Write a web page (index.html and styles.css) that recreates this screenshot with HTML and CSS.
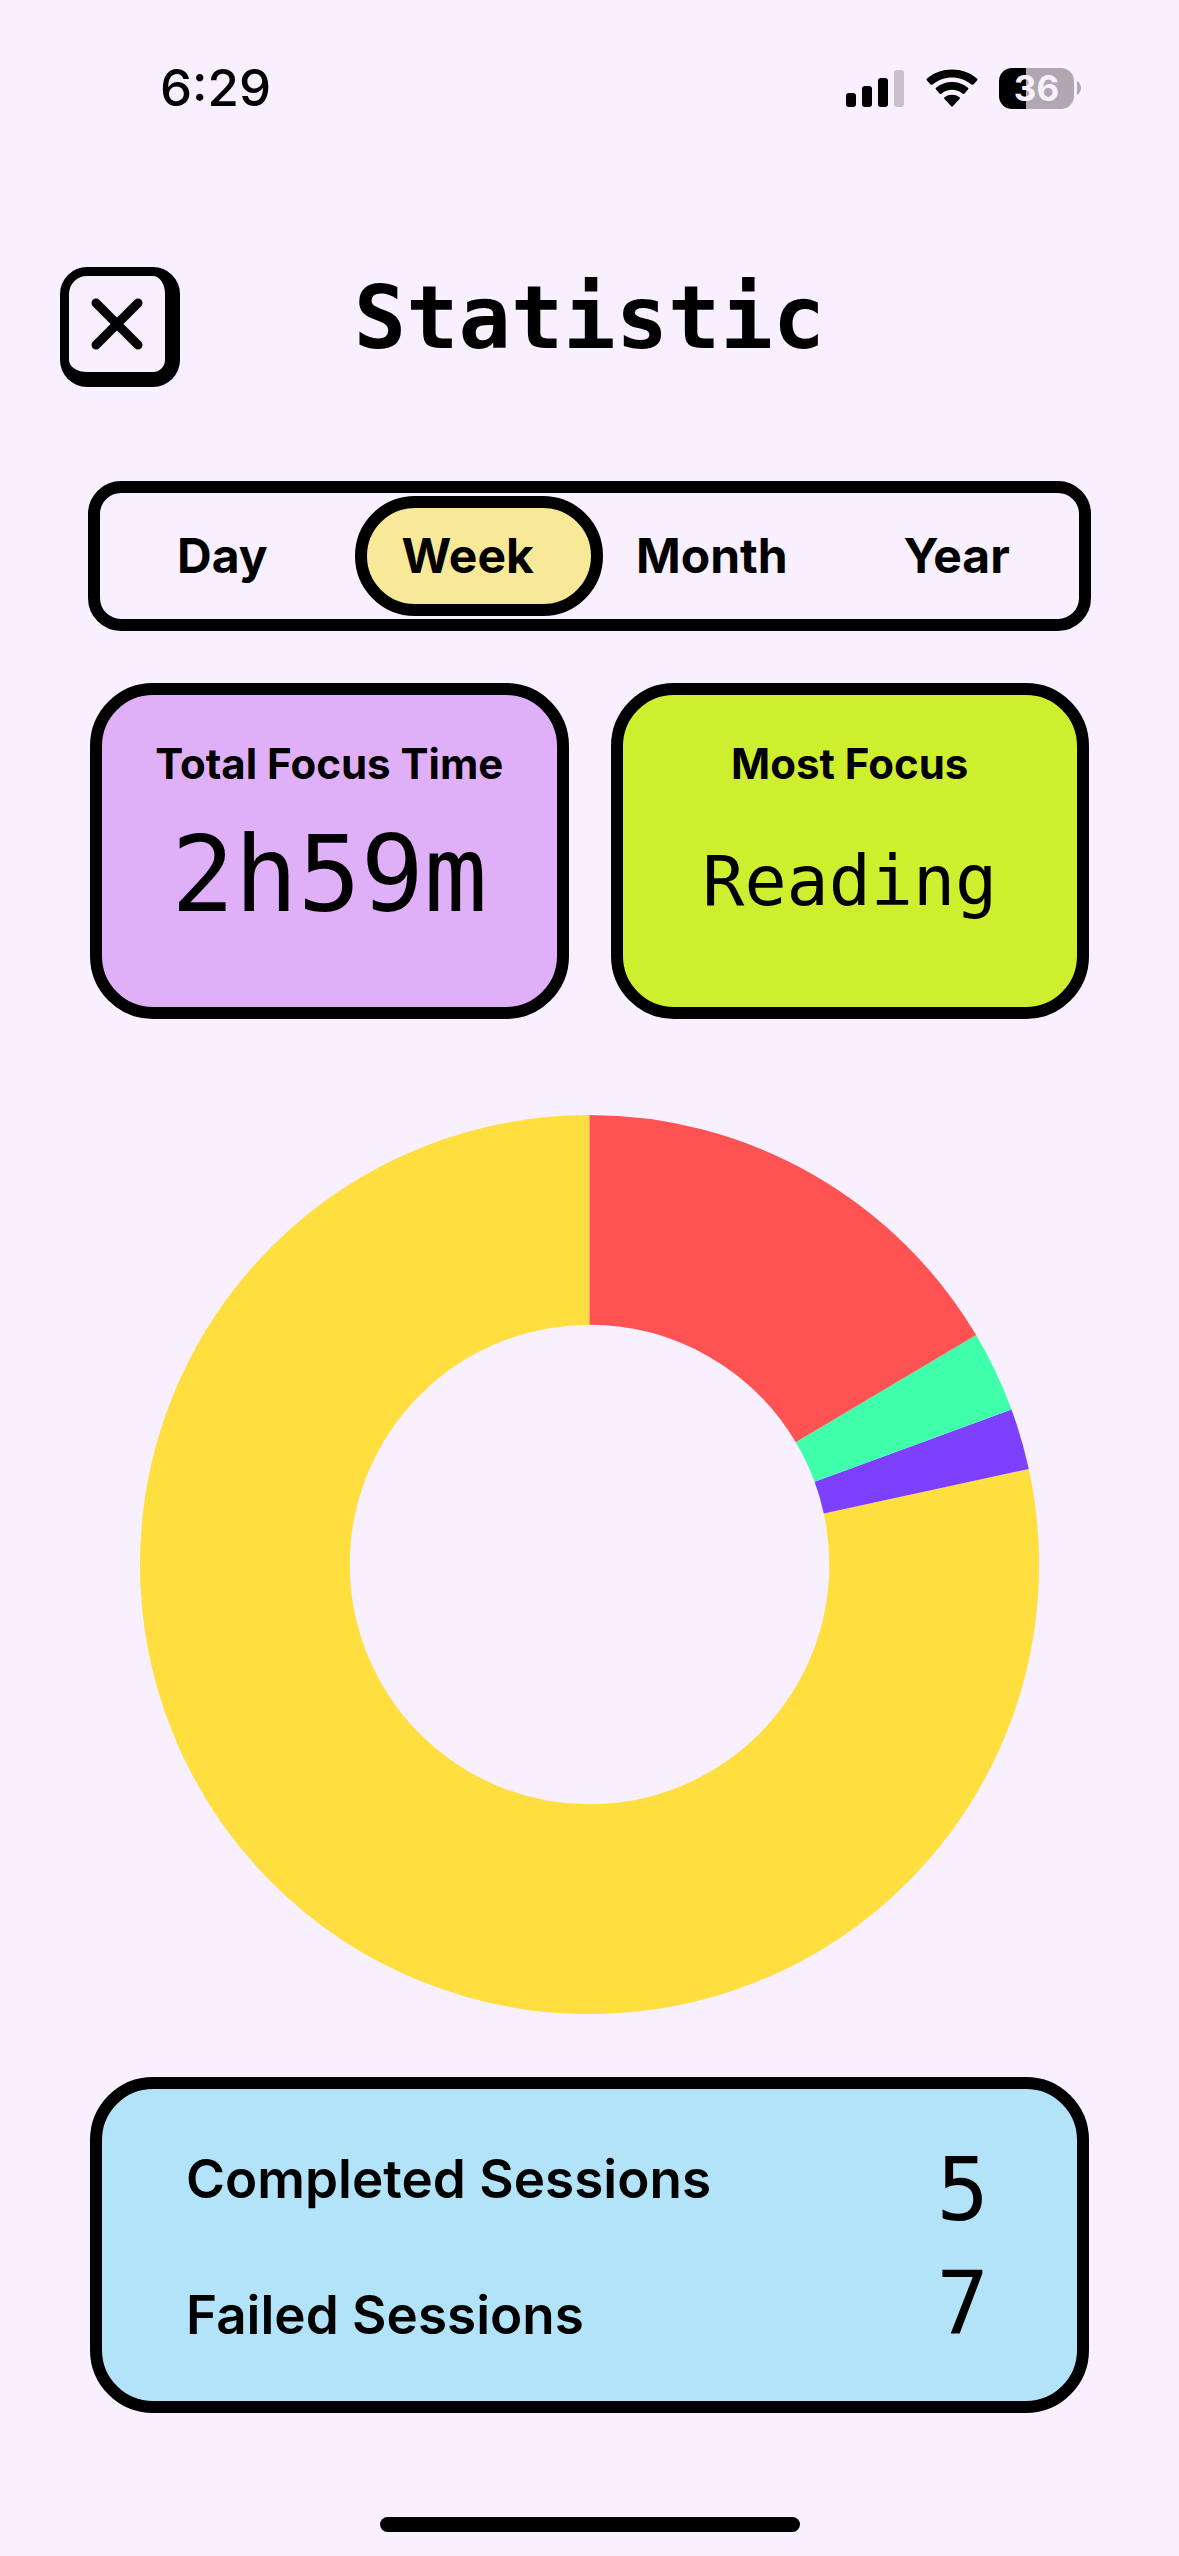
FILE: index.html
```html
<!DOCTYPE html>
<html lang="en">
<head>
<meta charset="utf-8">
<meta name="viewport" content="width=device-width, initial-scale=1">
<title>Statistic</title>
<link rel="stylesheet" href="styles.css">
</head>
<body>
<div class="screen">
  <div class="status">
    <time class="clock">6:29</time>
    <div class="indicators">
      <svg class="signal" viewBox="0 0 58 38" aria-hidden="true">
        <rect x="0" y="24" width="10" height="14" rx="3"/>
        <rect x="16" y="17" width="10" height="21" rx="3"/>
        <rect x="32" y="9" width="10" height="29" rx="3"/>
        <rect class="signal-off" x="48" y="1" width="10" height="37" rx="3"/>
      </svg>
      <svg class="wifi" viewBox="0 0 52 38" aria-hidden="true">
        <path d="M1 11.5Q0 10.500 1 9.500C15-2.500 37-2.500 51 9.500Q52 10.500 51 11.500L47.500 15.500Q46.500 16 45.500 15.500C34 6 18 6 6.500 15.500Q5.500 16 4.500 15.500Z"/>
        <path d="M10 20.500Q9 19.500 10 18.700C19 11 33 11 42 18.700Q43 19.500 42 20.500L38.500 24.500Q37.500 25.500 36.500 24.500C30 19.500 22 19.500 15.500 24.500Q14.500 25.500 13.500 24.500Z"/>
        <path d="M18.500 30Q17.500 29 18.500 28.300C23 25 29 25 33.500 28.300Q34.500 29 33.500 30L27 37Q26 38 25 37Z"/>
      </svg>
      <div class="battery">
        <span class="battery-level">36</span>
        <svg class="battery-tip" viewBox="0 0 4 14" aria-hidden="true"><path d="M0 0C2.500 1.500 4 4 4 7S2.500 12.500 0 14Z"/></svg>
      </div>
    </div>
  </div>

  <header class="header">
    <button class="close" type="button" aria-label="Close">
      <svg class="close-icon" viewBox="0 0 52 52" aria-hidden="true"><path d="M5 5L47 47M47 5L5 47"/></svg>
    </button>
    <h1 class="title">Statistic</h1>
  </header>

  <main class="content">
    <nav class="tabs" aria-label="Period">
      <button class="tab" type="button">Day</button>
      <button class="tab tab-active" type="button" aria-pressed="true">Week</button>
      <button class="tab" type="button">Month</button>
      <button class="tab" type="button">Year</button>
    </nav>

    <div class="cards">
      <section class="card card-time">
        <h2 class="card-label">Total Focus Time</h2>
        <p class="card-value">2h59m</p>
      </section>
      <section class="card card-most">
        <h2 class="card-label">Most Focus</h2>
        <p class="card-value card-value-small">Reading</p>
      </section>
    </div>

    <svg class="chart" viewBox="0 0 900 900" role="img" aria-label="Focus time by category">
      <g transform="rotate(-90 450 450)">
        <circle class="slice slice-yellow" cx="450" cy="450" r="345" pathLength="3600" stroke-dasharray="2823 3600" stroke-dashoffset="-777"/>
        <circle class="slice slice-violet" cx="450" cy="450" r="345" pathLength="3600" stroke-dasharray="79 3600" stroke-dashoffset="-698"/>
        <circle class="slice slice-green" cx="450" cy="450" r="345" pathLength="3600" stroke-dasharray="105 3600" stroke-dashoffset="-593"/>
        <circle class="slice slice-red" cx="450" cy="450" r="345" pathLength="3600" stroke-dasharray="593 3600"/>
      </g>
    </svg>

    <dl class="card sessions">
      <dt class="session-label">Completed Sessions</dt>
      <dd class="session-value">5</dd>
      <dt class="session-label session-label-last">Failed Sessions</dt>
      <dd class="session-value">7</dd>
    </dl>
  </main>

  <div class="home-bar"></div>
</div>
</body>
</html>
```
FILE: styles.css
```css
* {
  box-sizing: border-box;
  margin: 0;
  padding: 0;
}

body {
  background: #f8f0ff;
  color: #000;
  font-family: Inter, "Noto Sans", sans-serif;
}

button {
  border: 0;
  background: none;
  color: inherit;
  font: inherit;
  cursor: pointer;
}

.screen {
  display: flex;
  flex-direction: column;
  min-height: 100vh;
}

/* Status bar */
.status {
  display: flex;
  justify-content: space-between;
  align-items: center;
  height: 176px;
  padding: 0 98px 0 160px;
}

.clock {
  font-size: 51px;
  font-weight: 500;
  line-height: 60px;
}

.indicators {
  display: flex;
  align-items: center;
}

.signal {
  width: 58px;
  height: 38px;
  margin-right: 22px;
}

.signal-off {
  fill: #c9c0cf;
}

.wifi {
  width: 52px;
  height: 38px;
  margin-right: 21px;
}

.battery {
  display: flex;
  align-items: center;
  gap: 3px;
}

.battery-level {
  width: 75px;
  border-radius: 13px;
  background: linear-gradient(90deg, #000 36%, #aea8b1 36%);
  color: #f8f0ff;
  font-size: 35px;
  font-weight: 700;
  line-height: 41px;
  text-align: center;
}

.battery-tip {
  width: 4px;
  height: 14px;
  fill: #aea8b1;
}

/* Header */
.header {
  display: grid;
  grid-template-columns: 120px 1fr 120px;
  padding: 91px 60px 0;
}

.close {
  display: grid;
  place-items: center;
  height: 120px;
  border: 9px solid #000;
  border-right-width: 15px;
  border-bottom-width: 15px;
  border-radius: 27px;
}

.close-icon {
  width: 52px;
  height: 52px;
  stroke: #000;
  stroke-width: 9;
  stroke-linecap: round;
}

.title {
  font-family: "DejaVu Sans Mono", monospace;
  font-size: 87px;
  font-weight: 700;
  line-height: 102px;
  text-align: center;
}

/* Content */
.content {
  display: flex;
  flex-direction: column;
  padding: 94px 90px 0;
}

.tabs {
  display: grid;
  grid-template-columns: repeat(4, 1fr);
  height: 150px;
  margin: 0 -2px;
  padding: 3px 0;
  border: 12px solid #000;
  border-radius: 33px;
}

.tab {
  font-size: 48px;
  font-weight: 700;
  line-height: 60px;
}

/* The selected pill reaches a little into the next column */
.tab-active {
  margin: 0 -13px 0 10px;
  padding-right: 22px;
  border: 12px solid #000;
  border-radius: 60px;
  background: #f7e997;
}

.cards {
  display: grid;
  grid-template-columns: 1fr 1fr;
  gap: 42px;
  margin-top: 52px;
}

.card {
  min-height: 336px;
  border: 12px solid #000;
  border-radius: 63px;
}

.card-time {
  background: #dfb0f7;
}

.card-most {
  background: #ceef2e;
}

.card-label {
  padding-top: 45px;
  font-size: 42px;
  font-weight: 700;
  line-height: 48px;
  text-align: center;
}

.card-value {
  margin-top: 21px;
  font-family: "DejaVu Sans Mono", monospace;
  font-size: 105px;
  line-height: 132px;
  text-align: center;
}

.card-value-small {
  font-size: 70px;
  line-height: 144px;
}

.chart {
  align-self: center;
  width: 90%;
  margin-top: 96px;
}

.slice {
  fill: none;
  stroke-width: 210;
}

.slice-yellow {
  stroke: #ffde40;
}

.slice-violet {
  stroke: #7e40ff;
}

.slice-green {
  stroke: #40ffab;
}

.slice-red {
  stroke: #ff5353;
}

.sessions {
  display: grid;
  grid-template-columns: 1fr auto;
  align-content: start;
  margin-top: 63px;
  padding: 44px 88px 0 84px;
  background: #b2e3f8;
}

.session-label {
  align-self: start;
  font-size: 53px;
  font-weight: 600;
  line-height: 92px;
}

.session-label-last {
  align-self: end;
}

.session-value {
  font-family: "DejaVu Sans Mono", monospace;
  font-size: 87px;
  line-height: 114px;
}

.home-bar {
  align-self: center;
  width: 420px;
  height: 15px;
  margin: auto 0 24px;
  border-radius: 8px;
  background: #000;
}
```
